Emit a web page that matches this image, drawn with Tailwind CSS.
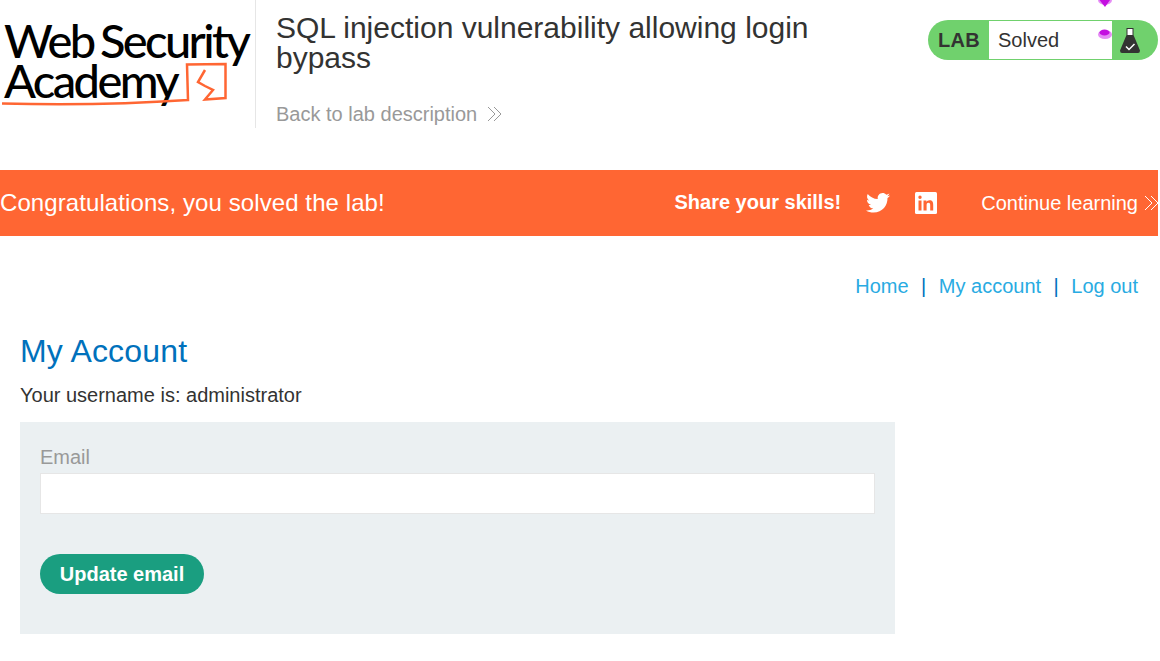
<!DOCTYPE html>
<html lang="en">
<head>
  <meta charset="UTF-8" />
  <title>SQL injection vulnerability allowing login bypass</title>
  <script src="https://cdn.jsdelivr.net/npm/@tailwindcss/browser@4"></script>
</head>
<body class="font-['Liberation_Sans',Arial,sans-serif] text-[#333332] bg-white w-[1160px] h-[661px] overflow-hidden">
  <!-- Academy header -->
  <header class="flex h-[170px] w-[1158px]">
    <div class="relative w-[256px] h-[128px] border-r border-[#e6e6e6] shrink-0">
      <div class="pt-[20px] pl-[4px] font-['Lato',sans-serif] text-black text-[47px] leading-[40px] tracking-[-2.6px] [word-spacing:-3px] whitespace-nowrap">
        <div class="font-medium">Web Security</div>
        <div class="font-medium">Academy</div>
      </div>
      <svg class="absolute left-0 top-[60px]" width="232" height="50" viewBox="0 0 232 50" fill="none" stroke="#ff6633" stroke-width="2.5">
        <path d="M2 43.500 C60 45 130 44 188 40 L187 4.500 L225.500 4 L225.500 38 L205 39.500 L213 30 L205 26 L198 22 L205 10" />
      </svg>
    </div>
    <div class="pl-5 pt-[13px] w-[570px] shrink-0">
      <h1 class="text-[30px] leading-[30px] whitespace-nowrap">SQL injection vulnerability allowing login<br />bypass</h1>
      <a href="#" class="flex items-center mt-[29px] text-[20px] leading-6 text-[#999999]">
        Back to lab description
        <svg class="ml-[10px]" width="16" height="16" viewBox="0 0 16 16" fill="none" stroke="#999999" stroke-width="1"><path d="M1 1 L8 8 L1 15 M7 1 L14 8 L7 15" /></svg>
      </a>
    </div>
    <div class="ml-auto mt-5 flex h-10 w-[230px] rounded-[20px] bg-[#70d16d] relative">
      <div class="w-[61px] pl-[10px] text-[20px] leading-10 font-bold tracking-[0.3px]">LAB</div>
      <div class="w-[123px] h-[38px] mt-px bg-white text-[20px] leading-[38px] pl-[9px]">Solved</div>
      <svg class="ml-[8px] mt-[8px]" width="20" height="25" viewBox="0 0 20 25">
        <path d="M6.500 0 H13.500 V7 L20 22.500 Q20 25 18 25 H2 Q0 25 0 22.500 L6.500 7 Z" fill="#333332" />
        <path d="M7.500 1 H12.500 V7 H7.500 Z" fill="#ffffff" />
        <path d="M6 18.500 L9 21.500 L14.500 16" fill="none" stroke="#ffffff" stroke-width="1.500" />
      </svg>
      <svg class="absolute left-[170px] top-[9px]" width="14" height="10" viewBox="0 0 14 10">
        <ellipse cx="7" cy="5.500" rx="7" ry="4.500" fill="#e58cf5" />
        <ellipse cx="6.500" cy="3.500" rx="5" ry="3" fill="#c40fe0" />
      </svg>
      <svg class="absolute left-[170px] top-[-20px]" width="14" height="7" viewBox="0 0 14 7">
        <ellipse cx="7" cy="0" rx="7" ry="5" fill="#e58cf5" />
        <path d="M1.500 0 H12 L7 7 Z" fill="#c40fe0" />
      </svg>
    </div>
  </header>

  <!-- Solved banner -->
  <section class="flex items-center h-[66px] w-[1158px] bg-[#ff6633] text-white">
    <h4 class="text-[24px] tracking-[0.09px]">Congratulations, you solved the lab!</h4>
    <div class="ml-auto flex items-center">
      <span class="text-[20px] font-bold -mt-[2px]">Share your skills!</span>
      <svg class="ml-[25px]" width="24" height="20" viewBox="0 0 24 20" fill="#ffffff"><path d="M24 2.400c-.9.400-1.800.700-2.800.800 1-.600 1.800-1.600 2.200-2.700-1 .600-2 1-3.100 1.200C19.300.700 18 0 16.600 0c-3.200 0-5.500 3-4.800 6C7.700 5.800 4.100 3.900 1.700.900.400 3.100 1 6 3.200 7.400c-.800 0-1.600-.200-2.200-.600-.100 2.300 1.600 4.500 3.900 5-.700.200-1.500.200-2.200.100.600 2 2.400 3.400 4.600 3.400C5.200 17 2.600 17.700 0 17.400 2.200 18.800 4.800 19.600 7.500 19.600c9.100 0 14.300-7.700 14-14.600 1-.700 1.800-1.600 2.500-2.600z" /></svg>
      <svg class="ml-[25px]" width="22" height="22" viewBox="0 0 22 22"><rect width="22" height="22" rx="1.500" fill="#ffffff" /><path d="M3.500 8.500h3v10h-3zM5 3.500a1.700 1.700 0 1 1 0 3.400 1.700 1.700 0 0 1 0-3.400zM8.500 8.500h2.900v1.400c.500-.900 1.600-1.700 3.100-1.700 3 0 3.700 2 3.700 4.600v5.700h-3v-5c0-1.200 0-2.700-1.700-2.700s-1.900 1.300-1.900 2.600v5.100h-3.100z" fill="#ff6633" /></svg>
      <a href="#" class="ml-[44px] flex items-center text-[20px]">
        Continue learning
        <svg class="ml-[6px]" width="14" height="16" viewBox="0 0 14 16" fill="none" stroke="#ffffff" stroke-width="1"><path d="M1 1 L8 8 L1 15 M7 1 L14 8 L7 15" /></svg>
      </a>
    </div>
  </section>

  <!-- Page content -->
  <div class="w-[1158px] px-5">
    <nav class="flex justify-end items-center pt-[38px] text-[20px] leading-6 text-[#29abe2]">
      <a href="#">Home</a>
      <span class="mx-[12.5px] text-[#0071bc]">|</span>
      <a href="#">My account</a>
      <span class="mx-[12.5px] text-[#0071bc]">|</span>
      <a href="#">Log out</a>
    </nav>
    <h1 class="mt-[35px] text-[32px] leading-9 tracking-[0.2px] text-[#0071bc]">My Account</h1>
    <p class="mt-[14px] text-[20px] leading-6">Your username is: administrator</p>
    <form class="mt-[15px] w-[875px] h-[212px] bg-[#ebf0f2] p-5">
      <label class="block text-[20px] leading-6 mt-[3px] text-[#999999]">Email</label>
      <input type="text" class="block mt-[4px] w-[835px] h-[41px] bg-white border border-[#e6e6e6]" />
      <button type="button" class="block mt-10 w-[164px] h-10 rounded-[20px] bg-[#1a9e80] text-white text-[20px] font-bold">Update email</button>
    </form>
  </div>
</body>
</html>
